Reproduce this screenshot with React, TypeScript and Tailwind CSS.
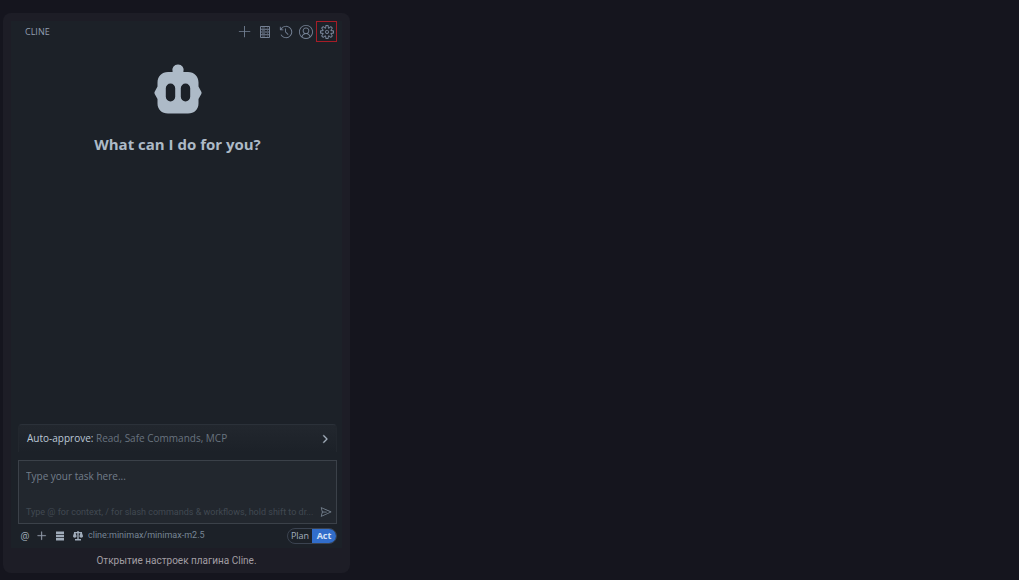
import React, { useState } from 'react';
import {
	VscAdd,
	VscHistory,
	VscAccount,
	VscSettingsGear,
	VscSend,
	VscChevronRight,
} from 'react-icons/vsc';

const ServerIcon = ({ className }: { className?: string }) => (
	<svg viewBox="0 0 12 14" className={className} fill="none" stroke="currentColor">
		<path d="M1.5 1.5h9v11h-9zM1.5 4.25h9M1.5 7h9M1.5 9.75h9" />
		<path strokeWidth=".6" d="M3 2.9h3M8 2.9h1M3 5.6h3M8 5.6h1M3 8.4h3M8 8.4h1M3 11.1h3M8 11.1h1" />
	</svg>
);

const StackIcon = ({ className }: { className?: string }) => (
	<svg viewBox="0 0 10 10" className={className} fill="currentColor">
		<path d="M1 .5h8v2.5H1zM1 3.7h8v2.5H1zM1 6.9h8v2.5H1z" />
	</svg>
);

const ScaleIcon = ({ className }: { className?: string }) => (
	<svg viewBox="0 0 10 10" className={className} fill="currentColor">
		<path d="M4.3 0h1.4v1H9v1l1 3c0 1.2-.8 1.7-1.8 1.7S6.4 6.2 6.400 5l1-2.8H5.700v5.9H8V9.500H2V8.100h2.300V2.200H2.600l1 2.800c0 1.200-.8 1.700-1.800 1.700S0 6.200 0 5l1-3V1h3.300z" />
	</svg>
);

const ClineLogo = () => (
	<svg viewBox="0 0 48 50" className="h-[50px] w-12" aria-hidden="true">
		<path
			fill="#adbac7"
			fillRule="evenodd"
			d="M24 0.5a5.6 5.6 0 0 1 5.4 7.5H34c6.2 0 10.5 4.5 10.5 10.5v4l2.8 5.2a2.200 2.200 0 0 1 0 2.200L44.500 35v4.500c0 6-4.300 10-10.500 10H14c-6.200 0-10.500-4-10.500-10V35L.7 29.900a2.200 2.200 0 0 1 0-2.200l2.800-5.200v-4C3.500 12.500 7.800 8 14 8h4.600A5.600 5.600 0 0 1 24 .5ZM16.500 19.500a4.700 4.700 0 0 0-4.700 4.700v8.600a4.700 4.700 0 0 0 9.400 0v-8.600a4.700 4.700 0 0 0-4.700-4.700ZM31.500 19.500a4.700 4.700 0 0 0-4.700 4.700v8.600a4.700 4.700 0 0 0 9.400 0v-8.600a4.700 4.700 0 0 0-4.700-4.700Z"
		/>
	</svg>
);

const Header = () => (
	<header className="flex items-center justify-between pl-[7px]">
		<span className="text-[9px] text-[#929eaf]">CLINE</span>
		<nav className="flex items-center text-[#748194]">
			<button aria-label="New task" className="flex h-5 w-[21px] items-center justify-center">
				<VscAdd className="h-[14px] w-[14px]" />
			</button>
			<button aria-label="MCP servers" className="flex h-5 w-5 items-center justify-center">
				<ServerIcon className="h-[14px] w-3" />
			</button>
			<button aria-label="History" className="flex h-5 w-[21px] items-center justify-center">
				<VscHistory className="h-[14px] w-[14px]" />
			</button>
			<button aria-label="Account" className="flex h-5 w-5 items-center justify-center">
				<VscAccount className="h-[14px] w-[14px]" />
			</button>
			<button
				aria-label="Settings"
				className="flex h-[21px] w-[21px] items-center justify-center border border-[#a51d27]"
			>
				<VscSettingsGear className="h-[14px] w-[14px]" />
			</button>
		</nav>
	</header>
);

const ModeSwitch = () => {
	const [mode, setMode] = useState('act');
	return (
		<div className="flex h-4 w-[50px] overflow-hidden rounded-full border border-[#3b4350] text-[9px]">
			<button
				onClick={() => setMode('plan')}
				className={`flex flex-1 items-center justify-center ${mode === 'plan' ? 'bg-[#316dca] font-bold text-[#d5e2f5]' : 'text-[#a3afbf]'}`}
			>
				Plan
			</button>
			<button
				onClick={() => setMode('act')}
				className={`flex flex-1 items-center justify-center ${mode === 'act' ? 'bg-[#316dca] font-bold text-[#d5e2f5]' : 'text-[#a3afbf]'}`}
			>
				Act
			</button>
		</div>
	);
};

const App = () => {
	return (
		<main className="flex min-h-screen bg-[#15151e] pt-[13px] pb-[7px] pl-[3px] font-['Open_Sans','Noto_Sans',sans-serif]">
			<figure className="flex w-full max-w-[347px] flex-col rounded-lg bg-[#1d1d26] px-2 pt-2">
				<section className="flex flex-1 flex-col bg-[#1c2128] pr-[5px] pl-[7px]">
					<Header />

					{/* Welcome */}
					<div className="flex flex-1 flex-col items-center pt-[22px]">
						<ClineLogo />
						<h1 className="mt-5 text-[15px] leading-5 font-bold text-[#adbac7]">
							What can I do for you?
						</h1>
					</div>

					{/* Auto-approve bar */}
					<button className="flex h-7 items-center justify-between rounded-t-sm border-x border-t border-[#2b3139] border-x-[#22272e] bg-gradient-to-b from-[#22272e] to-[#1c2128] pr-[5px] pl-2 text-[10px] text-[#69737f]">
						<span>
							<span className="text-[#bcc8d6]">Auto-approve:</span> Read, Safe Commands, MCP
						</span>
						<VscChevronRight className="h-3 w-3 stroke-1 text-[#adbac7]" />
					</button>

					{/* Task input */}
					<div className="mt-2 flex h-16 flex-col justify-between border border-[#3b4149] bg-[#22272e] pt-[7px] pr-1 pb-1 pl-[7px]">
						<input
							aria-label="Task"
							placeholder="Type your task here..."
							className="h-4 w-full bg-transparent text-[10px] outline-none placeholder:text-[#737e8b]"
						/>
						<div className="flex items-center justify-between">
							<span className="font-['Roboto',sans-serif] text-[9px] whitespace-nowrap text-[#414952]">
								Type @ for context, / for slash commands &amp; workflows, hold shift to dr...
							</span>
							<button aria-label="Send" className="shrink-0 text-[#778391]">
								<VscSend className="h-3 w-3" />
							</button>
						</div>
					</div>

					{/* Toolbar */}
					<div className="flex h-6 items-center justify-between">
						<div className="flex items-center text-[#a0acba]">
							<button aria-label="Add context" className="w-[14px] text-[10px]">
								@
							</button>
							<button aria-label="Add files" className="ml-1 flex w-3 justify-center">
								<VscAdd className="h-[10px] w-[10px] stroke-[0.5]" />
							</button>
							<button aria-label="Servers" className="ml-[6px] flex w-3 justify-center">
								<StackIcon className="h-[10px] w-[10px]" />
							</button>
							<button aria-label="Rules" className="ml-[6px] flex w-3 justify-center">
								<ScaleIcon className="h-[10px] w-[10px]" />
							</button>
							<a href="#model" className="ml-1 font-['Roboto',sans-serif] text-[9px] text-[#778594]">
								cline:minimax/minimax-m2.5
							</a>
						</div>
						<ModeSwitch />
					</div>
				</section>
				<figcaption className="flex h-[25px] items-center justify-center font-['Roboto','Noto_Sans',sans-serif] text-[10px] text-[#a29da4]">
					Открытие настроек плагина Cline.
				</figcaption>
			</figure>
		</main>
	);
};

export default App;
